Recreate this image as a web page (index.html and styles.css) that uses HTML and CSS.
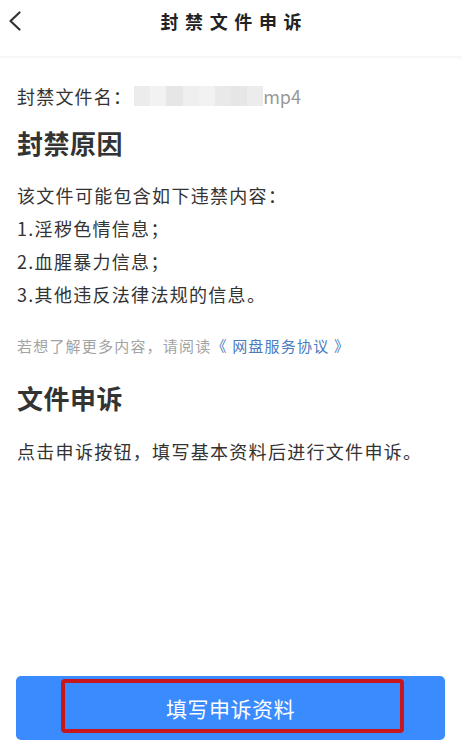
FILE: index.html
```html
<!DOCTYPE html>
<html lang="zh-CN">
<head>
<meta charset="utf-8">
<title>封禁文件申诉</title>
<link rel="stylesheet" href="styles.css">
</head>
<body>
<div class="page">
  <header class="nav">
    <span class="back">
      <svg width="14" height="20" viewBox="0 0 14 20"><path d="M11.5 1.5 L2.5 10 L11.5 18.5" fill="none" stroke="#333" stroke-width="2.2" stroke-linecap="round" stroke-linejoin="round"/></svg>
    </span>
    <h1 class="title">封禁文件申诉</h1>
  </header>
  <main class="content">
    <p class="fname">封禁文件名：<span class="blur"><i class="b1"></i><i class="b2"></i><i class="b3"></i><i class="b4"></i><i class="b2"></i><i class="b5"></i><i class="b3"></i><i class="b1"></i></span><span class="ext">mp4</span></p>
    <h2 class="heading h-first">封禁原因</h2>
    <p class="line l-first">该文件可能包含如下违禁内容：</p>
    <p class="line">1.淫秽色情信息；</p>
    <p class="line">2.血腥暴力信息；</p>
    <p class="line">3.其他违反法律法规的信息。</p>
    <p class="note">若想了解更多内容，请阅读<span class="link">《 网盘服务协议 》</span></p>
    <h2 class="heading h-second">文件申诉</h2>
    <p class="line l-after">点击申诉按钮，填写基本资料后进行文件申诉。</p>
  </main>
  <div class="footer">
    <button class="btn">填写申诉资料<span class="mark"></span></button>
  </div>
</div>
</body>
</html>
```
FILE: styles.css
```css
* { box-sizing: border-box; }
html, body { margin: 0; padding: 0; background: #fff; }
body {
  font-family: "Noto Sans CJK SC", "Noto Sans", sans-serif;
  color: #333;
}
.page {
  height: 741px;
  display: flex;
  flex-direction: column;
}
.nav {
  height: 57px;
  flex: none;
  position: relative;
  display: flex;
  justify-content: center;
  box-shadow: 0 1px 3px rgba(0,0,0,0.04);
  border-bottom: 1px solid #f6f6f6;
}
.back {
  position: absolute;
  left: 8px;
  top: 11px;
  display: block;
  line-height: 0;
}
.title {
  margin: 0;
  padding-top: 8px;
  font-size: 18px;
  line-height: 26px;
  font-weight: 700;
  letter-spacing: 6.6px;
  margin-right: -6.6px;
  color: #222;
}
.content {
  padding: 0 17px;
}
p { margin: 0; }
.fname {
  margin-top: 27px;
  font-size: 18px;
  line-height: 24px;
  letter-spacing: 1.2px;
  display: flex;
  align-items: center;
}
.blur {
  display: inline-flex;
  width: 129px;
  height: 20px;
  margin-left: 2px;
}
.blur i { flex: 1; height: 100%; display: block; }
.b1 { background: #ececec; }
.b2 { background: #f2f2f2; }
.b3 { background: #e6e6e6; }
.b4 { background: #efefef; }
.b5 { background: #e9e9e9; }
.ext { color: #999; letter-spacing: 0; }
.heading {
  margin: 0;
  font-size: 26px;
  line-height: 34px;
  font-weight: 700;
  color: #333;
  letter-spacing: 0.5px;
}
.h-first { margin-top: 18px; }
.h-second { margin-top: 24px; }
.line {
  font-size: 18px;
  line-height: 33px;
  letter-spacing: 1.3px;
}
.l-first { margin-top: 19px; }
.l-after { margin-top: 20px; }
.note {
  margin-top: 24px;
  font-size: 15px;
  line-height: 22px;
  letter-spacing: 1.2px;
  color: #a3a3a3;
}
.link { color: #4a7cc0; }
.footer {
  margin-top: auto;
  padding: 0 17px 1px 16px;
}
.btn {
  position: relative;
  width: 100%;
  height: 64px;
  border: 0;
  border-radius: 5px;
  background: #3a8bfe;
  color: #fff;
  font-family: "Noto Sans CJK SC", "Noto Sans", sans-serif;
  font-size: 21px;
  letter-spacing: 0.5px;
  display: flex;
  align-items: center;
  justify-content: center;
  padding: 0;
}
.mark {
  position: absolute;
  left: 45px;
  top: 3px;
  width: 343px;
  height: 54px;
  border: 4px solid #c8161e;
  border-radius: 4px;
}
```
